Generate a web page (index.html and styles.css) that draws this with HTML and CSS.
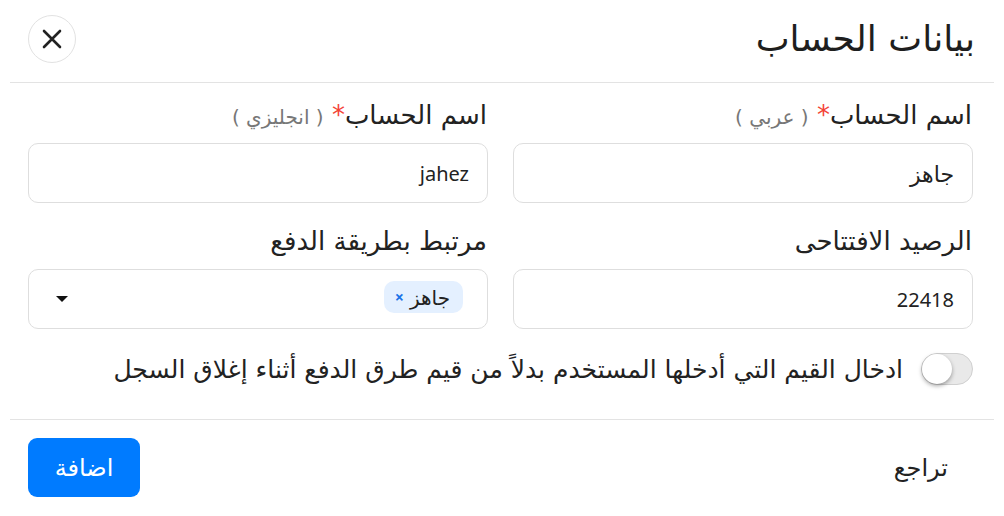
FILE: index.html
```html
<!DOCTYPE html>
<html lang="ar" dir="rtl">
<head>
<meta charset="utf-8">
<link rel="stylesheet" href="styles.css">
</head>
<body>
<div class="modal">
  <div class="header">
    <h1 class="title">بيانات الحساب</h1>
    <button class="close" aria-label="close">
      <svg width="22" height="22" viewBox="0 0 22 22"><path d="M3 3 L19 19 M19 3 L3 19" stroke="#222" stroke-width="2.6" stroke-linecap="round"/></svg>
    </button>
  </div>
  <div class="body">
    <div class="grid">
      <div class="field">
        <label class="label">اسم الحساب<span class="req">*</span> <span class="hint">( عربي )</span></label>
        <div class="input ar">جاهز</div>
      </div>
      <div class="field">
        <label class="label">اسم الحساب<span class="req">*</span> <span class="hint">( انجليزي )</span></label>
        <div class="input">jahez</div>
      </div>
      <div class="field">
        <label class="label">الرصيد الافتتاحى</label>
        <div class="input">22418</div>
      </div>
      <div class="field">
        <label class="label">مرتبط بطريقة الدفع</label>
        <div class="input select">
          <span class="chip">جاهز <span class="chip-x">×</span></span>
          <span class="caret"></span>
        </div>
      </div>
    </div>
    <div class="toggle-row">
      <span class="switch"><span class="knob"></span></span>
      <span class="toggle-text">ادخال القيم التي أدخلها المستخدم بدلاً من قيم طرق الدفع أثناء إغلاق السجل</span>
    </div>
  </div>
  <div class="footer">
    <button class="cancel">تراجع</button>
    <button class="submit">اضافة</button>
  </div>
</div>
</body>
</html>
```

FILE: styles.css
```css
* { box-sizing: border-box; }
body {
  margin: 0;
  background: #fff;
  font-family: "DejaVu Sans", sans-serif;
  color: #222;
}
.modal { width: 1004px; height: 516px; }
.header {
  margin: 0 10px;
  height: 83px;
  padding: 0 19px 0 18px;
  display: flex;
  align-items: center;
  justify-content: space-between;
  border-bottom: 1px solid #e3e3e3;
}
.title {
  margin: 0;
  font-weight: normal;
  font-size: 36px;
  line-height: 44px;
  color: #1e1e1e;
  padding-bottom: 4px;
}
.close {
  width: 48px;
  height: 48px;
  border-radius: 50%;
  border: 1px solid #e2e2e2;
  background: #fff;
  display: flex;
  align-items: center;
  justify-content: center;
  padding: 0;
  margin-top: -4px;
}
.body { padding: 14px 31px 0 28px; }
.grid {
  display: grid;
  grid-template-columns: 1fr 1fr;
  column-gap: 25px;
  row-gap: 20px;
}
.field { display: flex; flex-direction: column; gap: 10px; }
.label {
  font-family: "DejaVu Sans", sans-serif;
  font-size: 26px;
  line-height: 36px;
  height: 36px;
  color: #222;
  padding-right: 1px;
  white-space: nowrap;
}
.req { color: #f44336; }
.hint { color: #777; font-size: 20px; }
.input {
  height: 60px;
  border: 1px solid #dedede;
  border-radius: 10px;
  display: flex;
  align-items: center;
  padding: 0 18px;
  font-family: "Noto Sans", "DejaVu Sans", sans-serif;
  font-size: 20px;
  color: #222;
}
.input.ar { font-size: 22px; }
.select { justify-content: space-between; padding: 0 24px 0 27px; }
.chip {
  background: #e4f0ff;
  border-radius: 10px;
  height: 32px;
  display: flex;
  align-items: center;
  gap: 6px;
  padding: 0 13px 0 11px;
  font-size: 20px;
  margin-top: -4px;
}
.chip-x { color: #1a73e8; font-size: 16px; font-weight: bold; }
.caret {
  width: 0; height: 0;
  border-left: 6px solid transparent;
  border-right: 6px solid transparent;
  border-top: 6px solid #111;
}
.toggle-row {
  display: flex;
  align-items: center;
  gap: 18px;
  margin-top: 24px;
  height: 32px;
}
.switch {
  width: 52px;
  height: 32px;
  border-radius: 16px;
  background: #e9e9e9;
  border: 1px solid #d0d0d0;
  position: relative;
  flex: none;
}
.knob {
  position: absolute;
  left: 0;
  top: 0;
  width: 30px;
  height: 30px;
  border-radius: 50%;
  background: #fff;
  box-shadow: 0 2px 4px rgba(0,0,0,0.35);
}
.toggle-text { font-size: 25px; color: #222; white-space: nowrap; }
.footer {
  margin: 34px 10px 0;
  border-top: 1px solid #e3e3e3;
  padding: 18px 46px 0 18px;
  display: flex;
  justify-content: space-between;
  align-items: center;
}
.cancel {
  background: none;
  border: none;
  font-family: "DejaVu Sans", sans-serif;
  font-size: 24px;
  color: #222;
  padding: 0;
}
.submit {
  width: 112px;
  height: 59px;
  background: #007bff;
  color: #fff;
  border: none;
  border-radius: 9px;
  font-family: "DejaVu Sans", sans-serif;
  font-size: 24px;
}
```
